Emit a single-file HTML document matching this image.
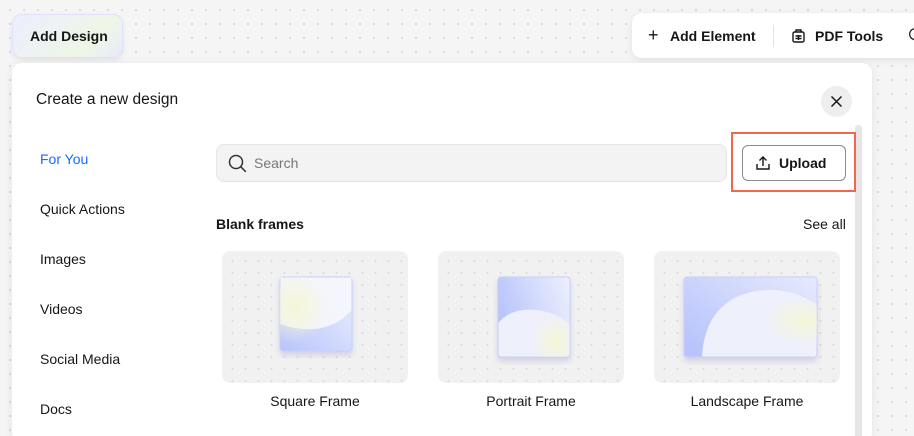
<!DOCTYPE html>
<html><head><style>
*{margin:0;padding:0;box-sizing:border-box}
html,body{width:914px;height:436px;overflow:hidden}
body{position:relative;font-family:"Liberation Sans",sans-serif;color:#161616;background:#f5f5f5;
background-image:radial-gradient(circle,#d6d6d6 0.8px,transparent 1.2px);background-size:14px 14px;background-position:3px 3px}
.abs{position:absolute}
.dots{background-image:radial-gradient(circle,#d9d9d9 0.8px,transparent 1.2px);background-size:13px 12px;background-position:4px 4px}
</style></head><body>
<div class="abs" style="left:12px;top:14px;width:111px;height:44px;border-radius:10px;background:linear-gradient(135deg,#eceefe,#eef6e6 70%,#e8eafc);border:1px solid #dfe2fa;box-shadow:0 2px 6px rgba(0,0,0,.08);font-size:14px;font-weight:600;line-height:42px;padding-left:17px">Add Design</div>
<div class="abs" style="left:632px;top:13px;width:300px;height:45px;border-radius:10px;background:#fff;box-shadow:0 2px 8px rgba(0,0,0,.08);font-size:14px;font-weight:600">
<span class="abs" style="left:16px;top:12px;font-size:18px;font-weight:400">+</span>
<span class="abs" style="left:38px;top:15px">Add Element</span>
<div class="abs" style="left:141px;top:12px;width:1px;height:22px;background:#e5e5e5"></div>
<svg class="abs" style="left:159px;top:15px" width="15" height="15" viewBox="0 0 15 15" fill="none" stroke="#161616" stroke-width="1.4"><rect x="2" y="4" width="11" height="10" rx="1.5"/><path d="M5 4V2h5v2M4.5 8h6M4.5 10.5h6M7.5 7v5"/></svg>
<span class="abs" style="left:183px;top:15px">PDF Tools</span>
<span class="abs" style="left:276px;top:12px;font-size:16px">&#9862;</span>
</div>
<div class="abs" style="left:12px;top:63px;width:860px;height:380px;background:#fff;border-radius:10px;box-shadow:0 2px 10px rgba(0,0,0,.08)">
<div class="abs" style="left:24px;top:28px;font-size:15.5px;font-weight:500">Create a new design</div>
<div class="abs" style="left:809px;top:23px;width:31px;height:31px;border-radius:50%;background:#eeeeee">
<svg width="31" height="31" viewBox="0 0 31 31" stroke="#161616" stroke-width="1.5"><path d="M10.5 10.5l10 10M20.5 10.5l-10 10"/></svg></div>
<div class="abs" style="left:843px;top:62px;width:7px;height:320px;background:#e6e6e6;border-radius:3px"></div>
<div class="abs" style="left:28px;top:71px;font-size:14px;line-height:50px">
<div style="color:#116dff">For You</div><div>Quick Actions</div><div>Images</div><div>Videos</div><div>Social Media</div><div>Docs</div></div>
</div>
<div class="abs" style="left:216px;top:144px;width:511px;height:38px;border-radius:8px;background:#f3f3f3;border:1px solid #e6e6e6">
<svg class="abs" style="left:11px;top:9px" width="19" height="19" viewBox="0 0 19 19" fill="none" stroke="#333" stroke-width="1.5"><circle cx="8" cy="8" r="6.5"/><path d="M12.8 12.8l5 5"/></svg>
<span class="abs" style="left:37px;top:10px;font-size:14px;color:#777">Search</span></div>
<div class="abs" style="left:731px;top:132px;width:125px;height:60px;border:2px solid #f0674f"></div>
<div class="abs" style="left:742px;top:145px;width:104px;height:36px;border:1px solid #8a8a8a;border-radius:6px;font-size:14px;font-weight:600">
<svg class="abs" style="left:12px;top:9px" width="16" height="16" viewBox="0 0 16 16" fill="none" stroke="#161616" stroke-width="1.4"><path d="M2 9v5h12V9M8 11V2M4.5 5.5L8 2l3.5 3.5"/></svg>
<span class="abs" style="left:36px;top:9px">Upload</span></div>
<div class="abs" style="left:216px;top:216px;font-size:14px;font-weight:600">Blank frames</div>
<div class="abs" style="left:803px;top:216px;font-size:14px;font-weight:500">See all</div>

<div class="abs dots" style="left:222px;top:251px;width:186px;height:132px;border-radius:8px;background-color:#f1f1f1"></div>
<div class="abs dots" style="left:438px;top:251px;width:186px;height:132px;border-radius:8px;background-color:#f1f1f1"></div>
<div class="abs dots" style="left:654px;top:251px;width:186px;height:132px;border-radius:8px;background-color:#f1f1f1"></div>

<svg class="abs" style="left:275px;top:275px" width="84" height="85" viewBox="0 0 84 85">
<defs><linearGradient id="g1" x1="0" y1="1" x2="1" y2="0"><stop offset="0" stop-color="#b8c4fb"/><stop offset="1" stop-color="#eef0fe"/></linearGradient>
<radialGradient id="y1" cx=".2" cy=".4" r=".5"><stop offset="0" stop-color="#f4f6d6"/><stop offset="1" stop-color="#f4f6d6" stop-opacity="0"/></radialGradient>
<filter id="s"><feDropShadow dx="0" dy="4" stdDeviation="3" flood-color="#8890c0" flood-opacity=".3"/></filter></defs>
<g filter="url(#s)"><rect x="5" y="2" width="72" height="74" rx="3" fill="url(#g1)" stroke="#c7cffc"/></g>
<path d="M5.5 2.5H76.5V35C62 53 35 60 5.5 49Z" fill="#f6f7fd" opacity=".9"/>
<rect x="5" y="2" width="72" height="74" rx="3" fill="url(#y1)"/>
</svg>
<svg class="abs" style="left:493px;top:275px" width="82" height="90" viewBox="0 0 82 90">
<defs><linearGradient id="g2" x1="0" y1=".4" x2="1" y2="0"><stop offset="0" stop-color="#b8c4fb"/><stop offset="1" stop-color="#eef0fe"/></linearGradient>
<radialGradient id="y2" cx=".8" cy=".8" r=".35"><stop offset="0" stop-color="#f4f6d6"/><stop offset="1" stop-color="#f4f6d6" stop-opacity="0"/></radialGradient></defs>
<g filter="url(#s)"><rect x="5" y="2" width="72" height="80" rx="3" fill="url(#g2)" stroke="#c7cffc"/></g>
<path d="M5.5 48C20 28 60 32 76.5 50V78.5Q76.5 81.5 73.5 81.5H8.5Q5.5 81.5 5.5 78.5Z" fill="#eef0fc"/>
<rect x="5" y="2" width="72" height="80" rx="3" fill="url(#y2)"/>
</svg>
<svg class="abs" style="left:679px;top:275px" width="144" height="90" viewBox="0 0 144 90">
<defs><linearGradient id="g3" x1="0" y1=".8" x2="1" y2="0"><stop offset="0" stop-color="#b8c4fb"/><stop offset="1" stop-color="#e6eafd"/></linearGradient>
<radialGradient id="y3" cx=".9" cy=".55" r=".3"><stop offset="0" stop-color="#f4f6d6"/><stop offset="1" stop-color="#f4f6d6" stop-opacity="0"/></radialGradient></defs>
<g filter="url(#s)"><rect x="5" y="2" width="133" height="80" rx="3" fill="url(#g3)" stroke="#c7cffc"/></g>
<path d="M23 81.5C26 30 60 14 95 15C115 16 130 24 137.5 30V78.5Q137.5 81.5 134.5 81.5Z" fill="#eef0fc"/>
<rect x="5" y="2" width="133" height="80" rx="3" fill="url(#y3)"/>
</svg>
<div class="abs" style="left:222px;top:393px;width:186px;text-align:center;font-size:14px">Square Frame</div>
<div class="abs" style="left:438px;top:393px;width:186px;text-align:center;font-size:14px">Portrait Frame</div>
<div class="abs" style="left:654px;top:393px;width:186px;text-align:center;font-size:14px">Landscape Frame</div>
</body></html>
